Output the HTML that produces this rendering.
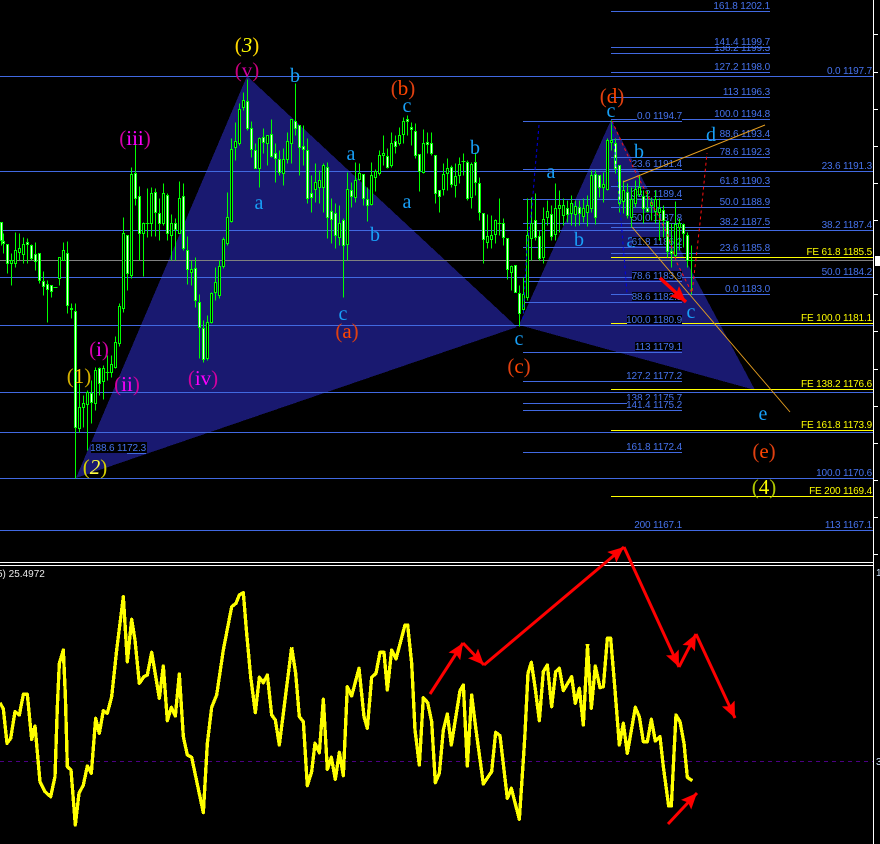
<!DOCTYPE html>
<html><head><meta charset="utf-8"><style>
html,body{margin:0;padding:0;background:#000;width:880px;height:844px;overflow:hidden}
svg{display:block}
.l{font:10px "Liberation Sans",sans-serif;letter-spacing:-.15px;fill:#4673ee;text-anchor:end}
.y{font:10px "Liberation Sans",sans-serif;letter-spacing:-.15px;fill:#ffff00;text-anchor:end}
.w{font:20px "Liberation Serif",serif;text-anchor:middle;fill:#18a0f8}
.p{font:21px "Liberation Serif",serif;text-anchor:middle}
</style></head><body>
<svg width="880" height="844" viewBox="0 0 880 844" xmlns="http://www.w3.org/2000/svg">
<rect width="880" height="844" fill="#000"/>
<g fill="#191970" shape-rendering="crispEdges">
<polygon points="76,478 247,76 517,327"/>
<polygon points="519,325 611,120 755,390"/>
</g>
<g stroke="#4169e1" stroke-width="1" shape-rendering="crispEdges" fill="none">
<path d="M0 76.5H873M0 171.5H873M0 230.5H873M0 277.5H873M0 325.5H873M0 392.5H873M0 432.5H873M0 478.5H873M0 530.5H873"/>
<path d="M611 11.5H770M611 47.5H770M611 53.5H770M611 72.5H770M611 97.5H770M611 119.5H770M611 139.5H770M611 157.5H770M611 186.5H770M611 207.5H770M611 227.5H770M611 253.5H770M611 294.5H770"/>
<path d="M523 121.5H682M523 169.5H682M523 199.5H682M523 223.5H682M523 247.5H682M523 281.5H682M523 302.5H682M523 325.5H682M523 352.5H682M523 381.5H682M523 403.5H682M523 410.5H682M523 452.5H682M127 453.5H146"/>
</g>
<path d="M0 260.5H873" stroke="#808080" shape-rendering="crispEdges"/>
<path d="M611 257.5H873M611 323.5H873M611 389.5H873M611 430.5H873M611 496.5H873" stroke="#ffff00" shape-rendering="crispEdges"/>
<text class="w" x="631" y="247">a</text>
<g>
<text class="l" x="770" y="9">161.8 1202.1</text>
<text class="l" x="770" y="51">138.2 1199.3</text>
<rect x="715" y="37" width="55" height="9" fill="#000"/>
<text class="l" x="770" y="45">141.4 1199.7</text>
<text class="l" x="770" y="70">127.2 1198.0</text>
<text class="l" x="770" y="95">113 1196.3</text>
<text class="l" x="770" y="117">100.0 1194.8</text>
<text class="l" x="770" y="137">88.6 1193.4</text>
<text class="l" x="770" y="155">78.6 1192.3</text>
<text class="l" x="770" y="184">61.8 1190.3</text>
<text class="l" x="770" y="205">50.0 1188.9</text>
<text class="l" x="770" y="225">38.2 1187.5</text>
<text class="l" x="770" y="251">23.6 1185.8</text>
<text class="l" x="770" y="292">0.0 1183.0</text>
<text class="l" x="872" y="74">0.0 1197.7</text>
<text class="l" x="872" y="169">23.6 1191.3</text>
<text class="l" x="872" y="228">38.2 1187.4</text>
<text class="l" x="872" y="275">50.0 1184.2</text>
<text class="l" x="872" y="476">100.0 1170.6</text>
<text class="l" x="872" y="528">113 1167.1</text>
<text class="y" x="872" y="255">FE 61.8 1185.5</text>
<text class="y" x="872" y="321">FE 100.0 1181.1</text>
<text class="y" x="872" y="387">FE 138.2 1176.6</text>
<text class="y" x="872" y="428">FE 161.8 1173.9</text>
<text class="y" x="872" y="494">FE 200 1169.4</text>
<rect x="637" y="111" width="45" height="9" fill="#000"/><text class="l" x="682" y="119">0.0 1194.7</text>
<rect x="632" y="159" width="50" height="9" fill="#000"/><text class="l" x="682" y="167">23.6 1191.4</text>
<rect x="632" y="189" width="50" height="9" fill="#000"/><text class="l" x="682" y="197">38.2 1189.4</text>
<rect x="632" y="213" width="50" height="9" fill="#000"/><text class="l" x="682" y="221">50.0 1187.8</text>
<rect x="632" y="237" width="50" height="9" fill="#000"/><text class="l" x="682" y="245">61.8 1186.2</text>
<rect x="632" y="271" width="50" height="9" fill="#000"/><text class="l" x="682" y="279">78.6 1183.9</text>
<rect x="632" y="292" width="50" height="9" fill="#000"/><text class="l" x="682" y="300">88.6 1182.5</text>
<rect x="627" y="315" width="55" height="9" fill="#000"/><text class="l" x="682" y="323">100.0 1180.9</text>
<rect x="635" y="342" width="47" height="9" fill="#000"/><text class="l" x="682" y="350">113 1179.1</text>
<text class="l" x="682" y="379">127.2 1177.2</text>
<text class="l" x="682" y="401">138.2 1175.7</text>
<rect x="627" y="400" width="55" height="9" fill="#000"/><text class="l" x="682" y="408">141.4 1175.2</text>
<text class="l" x="682" y="450">161.8 1172.4</text>
<text class="l" x="682" y="528">200 1167.1</text>
<rect x="91" y="442" width="56" height="11" fill="#000"/><text class="l" x="146" y="451">188.6 1172.3</text>
</g>
<g transform="translate(.5,.5)" shape-rendering="crispEdges" stroke="#00ff00" stroke-width="1">
<path fill="none" d="M1 222V245M3 233V253M7 244V273M11 253V285M15 232V267M19 233V260M23 237V263M27 238V263M31 244V260M35 242V270M39 253V283M43 271V295M47 280V322M51 285V297M53 287H57M59 257V285M63 242V260M67 241V313M71 303V318M75 303V478M79 383V432M83 395V427M87 390V450M91 380V423M95 367V410M99 367V395M103 365V399M107 355V380M105 372H109M111 355V377M115 336V368M119 303V346M123 217V312M127 235V290M131 167V278M135 144V205M139 186V260M143 222V276M147 188V237M145 223H149M151 187V236M155 188V236M159 198V240M163 183V225M167 193V240M171 214V260M175 218V260M179 181V233M183 183V250M187 236V284M191 260V285M195 257V307M199 294V358M203 320V362M207 315V360M211 292V323M215 267V300M219 260V298M223 237V268M227 192V245M231 138V222M235 122V160M239 103V145M243 92V110M247 79V130M251 121V157M255 143V168M259 137V187M263 128V153M267 135V165M271 119V157M275 143V182M279 150V175M283 148V185M287 132V163M291 119V163M295 83V135M299 125V175M303 125V165M307 138V203M311 175V212M315 163V202M319 170V203M323 163V212M327 162V238M331 198V243M335 203V248M339 205V245M343 218V297M347 172V260M351 182V207M355 162V202M359 163V180M363 174V205M367 187V221M371 162V205M375 169V191M379 150V175M383 135V165M387 148V168M391 132V167M395 135V153M399 127V145M403 117V143M407 115V135M411 122V145M415 123V158M419 154V191M423 129V173M427 132V153M431 132V155M435 155V203M439 190V212M443 163V195M447 158V190M451 165V187M455 163V197M459 157V183M463 153V175M461 161H465M467 160V200M471 162V208M475 152V195M479 177V220M483 213V263M487 214V248M491 215V248M495 219V243M499 198V235M497 223H501M503 218V245M507 238V279M511 265V290M515 265V292M519 285V326M523 277V313M527 198V300M531 197V260M535 193V240M539 230V260M543 207V263M547 200V225M551 205V240M555 183V240M559 190V232M563 198V225M567 200V222M571 195V225M575 200V226M579 200V225M583 198V222M587 195V226M591 170V212M595 170V224M599 175V197M603 172V202M607 138V190M611 120V150M615 138V173M619 165V212M623 180V213M627 183V218M631 187V227M635 180V207M639 175V196M643 190V223M647 190V212M651 197V220M655 190V223M659 198V240M663 205V237M667 221V257M671 223V267M675 201V257M679 218V250M683 223V247M687 232V267M691 245V294M689 260H693"/>
<path fill="#eaffea" d="M0 222h2v18h-2zM2 241h2v2h-2zM6 244h2v19h-2zM26 242h2v2h-2zM30 245h2v13h-2zM34 254h2v7h-2zM38 253h2v27h-2zM42 281h2v5h-2zM46 284h2v5h-2zM50 285h2v6h-2zM66 253h2v52h-2zM70 308h2v1h-2zM74 311h2v116h-2zM90 393h2v9h-2zM98 368h2v15h-2zM126 235h2v38h-2zM134 173h2v25h-2zM138 196h2v37h-2zM154 192h2v20h-2zM158 213h2v10h-2zM166 195h2v38h-2zM174 223h2v6h-2zM182 196h2v52h-2zM186 250h2v19h-2zM194 268h2v32h-2zM198 302h2v25h-2zM202 328h2v31h-2zM246 101h2v27h-2zM250 128h2v21h-2zM254 150h2v18h-2zM262 137h2v5h-2zM270 134h2v22h-2zM274 153h2v5h-2zM278 159h2v13h-2zM294 121h2v7h-2zM298 125h2v22h-2zM302 146h2v3h-2zM306 150h2v48h-2zM310 193h2v4h-2zM326 167h2v50h-2zM330 211h2v8h-2zM334 213h2v22h-2zM342 220h2v25h-2zM350 190h2v6h-2zM362 174h2v24h-2zM366 199h2v6h-2zM386 156h2v11h-2zM394 141h2v5h-2zM406 119h2v2h-2zM410 127h2v2h-2zM414 131h2v24h-2zM418 154h2v17h-2zM426 142h2v2h-2zM430 143h2v10h-2zM434 155h2v38h-2zM438 190h2v6h-2zM450 167h2v17h-2zM466 162h2v36h-2zM474 162h2v20h-2zM478 183h2v29h-2zM482 213h2v26h-2zM502 223h2v14h-2zM506 238h2v31h-2zM514 265h2v27h-2zM518 293h2v20h-2zM534 220h2v17h-2zM538 236h2v22h-2zM550 214h2v22h-2zM566 208h2v6h-2zM578 207h2v6h-2zM594 174h2v43h-2zM598 175h2v12h-2zM614 143h2v25h-2zM618 165h2v38h-2zM626 192h2v23h-2zM642 196h2v12h-2zM646 208h2v3h-2zM662 210h2v10h-2zM666 221h2v30h-2zM670 251h2v2h-2zM682 224h2v9h-2zM686 235h2v25h-2z"/>
<path fill="#000" d="M10 260h2v3h-2zM14 250h2v13h-2zM18 248h2v4h-2zM22 244h2v10h-2zM58 257h2v21h-2zM62 250h2v10h-2zM78 407h2v21h-2zM82 403h2v4h-2zM86 392h2v12h-2zM94 370h2v33h-2zM102 368h2v13h-2zM110 364h2v8h-2zM114 342h2v25h-2zM118 306h2v37h-2zM122 233h2v75h-2zM130 174h2v101h-2zM142 223h2v10h-2zM150 193h2v30h-2zM162 193h2v30h-2zM170 223h2v12h-2zM178 198h2v35h-2zM190 269h2v3h-2zM206 322h2v36h-2zM210 293h2v29h-2zM214 282h2v10h-2zM218 266h2v29h-2zM222 239h2v27h-2zM226 217h2v26h-2zM230 149h2v72h-2zM234 141h2v6h-2zM238 109h2v34h-2zM242 100h2v7h-2zM258 138h2v30h-2zM266 135h2v8h-2zM282 159h2v14h-2zM286 141h2v18h-2zM290 119h2v24h-2zM314 182h2v7h-2zM318 180h2v7h-2zM322 165h2v22h-2zM338 223h2v14h-2zM346 189h2v55h-2zM354 180h2v17h-2zM358 173h2v6h-2zM370 175h2v29h-2zM374 171h2v6h-2zM378 155h2v18h-2zM382 153h2v2h-2zM390 143h2v22h-2zM398 135h2v8h-2zM402 121h2v13h-2zM422 143h2v29h-2zM442 174h2v15h-2zM446 168h2v5h-2zM454 176h2v9h-2zM458 164h2v11h-2zM470 164h2v33h-2zM486 236h2v6h-2zM490 235h2v4h-2zM494 220h2v14h-2zM510 266h2v6h-2zM522 294h2v15h-2zM526 235h2v62h-2zM530 223h2v15h-2zM542 219h2v38h-2zM546 211h2v6h-2zM554 208h2v26h-2zM558 205h2v3h-2zM562 205h2v10h-2zM570 203h2v10h-2zM574 206h2v8h-2zM582 208h2v8h-2zM586 205h2v7h-2zM590 175h2v33h-2zM602 184h2v3h-2zM606 140h2v49h-2zM610 140h2v2h-2zM622 190h2v11h-2zM630 199h2v18h-2zM634 189h2v14h-2zM638 187h2v7h-2zM650 202h2v3h-2zM654 199h2v12h-2zM658 208h2v4h-2zM674 224h2v31h-2zM678 223h2v4h-2z"/>
</g>
<g fill="none">
<path d="M612 121L633 167L667 233L677 263L692 293L697 250L700 223L705 173L707 153" stroke="#ff1010" stroke-dasharray="3 3"/>
<path d="M539 125L535 170L532 207L527 247L523 320" stroke="#0000e6" stroke-dasharray="3 3"/>
<path d="M612 122L620 207L627 293" stroke="#0000e6" stroke-dasharray="3 3"/>
<path d="M623 182L765 125" stroke="#e8a020"/>
<path d="M632 227L790 412" stroke="#e8a020" stroke-width=".9"/>
</g>
<g>
<text class="p" x="247" y="52" fill="#ffd700">(<tspan font-style="italic" fill="#ffff00">3</tspan>)</text>
<text class="p" x="247" y="77" fill="#c8007c">(<tspan fill="#d000a0">v</tspan>)</text>
<text class="p" x="135" y="145" fill="#d000a0">(<tspan fill="#ff00ff">iii</tspan>)</text>
<text class="p" x="99" y="356" fill="#d000a0">(<tspan fill="#ff00ff">i</tspan>)</text>
<text class="p" x="127" y="391" fill="#d000a0">(<tspan fill="#ff00ff">ii</tspan>)</text>
<text class="p" x="203" y="385" fill="#d000a0">(<tspan fill="#ff00ff">iv</tspan>)</text>
<text class="p" x="79" y="383" fill="#d4b000">(<tspan fill="#ffc800">1</tspan>)</text>
<text class="p" x="95" y="474" fill="#d8d000">(<tspan font-style="italic" fill="#ffff40">2</tspan>)</text>
<text class="p" x="347" y="338" fill="#e04010">(<tspan fill="#ff4500">a</tspan>)</text>
<text class="p" x="403" y="95" fill="#e04010">(<tspan fill="#ff4500">b</tspan>)</text>
<text class="p" x="519" y="373" fill="#e04010">(<tspan fill="#ff4500">c</tspan>)</text>
<text class="p" x="612" y="103" fill="#e04010">(<tspan fill="#ff4500">d</tspan>)</text>
<text class="p" x="764" y="458" fill="#e04010">(<tspan fill="#ff4500">e</tspan>)</text>
<text class="p" x="764" y="494" fill="#b0c800">(<tspan fill="#ffff00">4</tspan>)</text>
<text class="w" x="295" y="82">b</text>
<text class="w" x="259" y="209">a</text>
<text class="w" x="351" y="160">a</text>
<text class="w" x="407" y="112">c</text>
<text class="w" x="407" y="208">a</text>
<text class="w" x="375" y="241">b</text>
<text class="w" x="343" y="320">c</text>
<text class="w" x="475" y="154">b</text>
<text class="w" x="551" y="178">a</text>
<text class="w" x="579" y="246">b</text>
<text class="w" x="519" y="345">c</text>
<text class="w" x="611" y="117">c</text>
<text class="w" x="639" y="158">b</text>
<text class="w" x="711" y="141">d</text>
<text class="w" x="691" y="318">c</text>
<text class="w" x="763" y="420">e</text>
</g>
<defs><marker id="a" markerUnits="userSpaceOnUse" markerWidth="17" markerHeight="14" refX="16" refY="7" orient="auto"><path d="M0 0L16 7L0 14L3 7Z" fill="#ff0000"/></marker></defs>
<path d="M660 278L686 302" stroke="#f00" stroke-width="3.5" marker-end="url(#a)"/>
<path d="M0 562.5H873M0 565.5H873M873.5 0V844" stroke="#fff" shape-rendering="crispEdges"/>
<path d="M874 34.5h4M874 72.5h4M874 109.5h4M874 146.5h4M874 183.5h4M874 220.5h4M874 294.5h4M874 331.5h4M874 369.5h4M874 406.5h4M874 443.5h4M874 480.5h4M874 517.5h4M874 554.5h4" stroke="#fff" shape-rendering="crispEdges"/>
<rect x="875" y="256" width="5" height="10" fill="#fff"/>
<text x="876" y="576" font-family="Liberation Sans,sans-serif" font-size="10" fill="#cfe6ff">1</text>
<text x="876" y="765" font-family="Liberation Sans,sans-serif" font-size="10" fill="#cfe6ff">3</text>
<text x="-3" y="577" font-family="Liberation Sans,sans-serif" font-size="10" fill="#e8e8e8">5) 25.4972</text>
<path d="M0 761.5H873" stroke="#4b0082" stroke-dasharray="4 4" shape-rendering="crispEdges"/>
<g fill="none" stroke="#ffff00" stroke-width="10" stroke-linejoin="round" shape-rendering="crispEdges">
<polyline transform="translate(0,560) scale(.33333)" points="0,428 10,447 21,550 32,535 45,455 58,465 70,403 82,403 95,538 105,498 115,610 120,665 135,695 152,710 165,650 172,440 178,310 190,270 196,405 202,620 213,630 226,795 237,700 250,675 262,618 274,640 287,475 298,520 310,452 322,460 335,410 350,270 370,110 382,305 395,178 405,240 418,370 432,350 442,345 455,277 478,415 490,318 502,482 514,442 526,468 538,342 550,530 562,585 575,592 610,758 622,550 635,442 650,405 670,270 695,140 708,130 718,105 730,98 740,220 752,350 766,458 778,352 790,368 802,345 815,465 826,480 838,555 875,262"/>
<polyline transform="translate(290,560) scale(.33333)" points="5,262 17,340 28,470 40,485 52,677 65,635 75,550 88,578 100,418 112,628 124,592 136,658 148,577 160,647 172,380 185,408 207,325 222,470 232,505 245,352 258,340 270,277 282,277 292,390 305,270 318,297 345,195 353,195 365,310 375,510 388,615 400,413 413,428 425,485 436,668 448,640 460,510 472,462 484,555 510,392 520,375 532,618 545,405 558,510 580,672 605,635 617,517 630,527 652,715 664,685 688,778 700,600 705,520 714,340 724,307 735,380 748,482 760,335 772,315 785,440 797,335 808,325 820,392 845,350 856,430 868,385 880,495 888,345 893,252"/>
<polyline transform="translate(580,540) scale(.33333)" points="22,312 34,505 46,378 60,443 70,440 82,295 92,295 105,450 118,615 130,550 142,640 166,502 178,530 190,605 202,605 214,538 226,603 240,590 250,680 266,798 274,798 282,640 288,525 300,545 312,610 322,712 337,722"/>
</g>
<g fill="none" stroke="#ff0000" stroke-width="3">
<path d="M430 694L463 643" marker-end="url(#a)"/>
<path d="M463 643L484 665" marker-end="url(#a)"/>
<path d="M484 665L624 547" marker-end="url(#a)"/>
<path d="M624 547L679 667" marker-end="url(#a)"/>
<path d="M679 667L696 634" marker-end="url(#a)"/>
<path d="M696 634L735 718" marker-end="url(#a)"/>
<path d="M668 824L697 793" marker-end="url(#a)"/>
</g>
</svg>
</body></html>
